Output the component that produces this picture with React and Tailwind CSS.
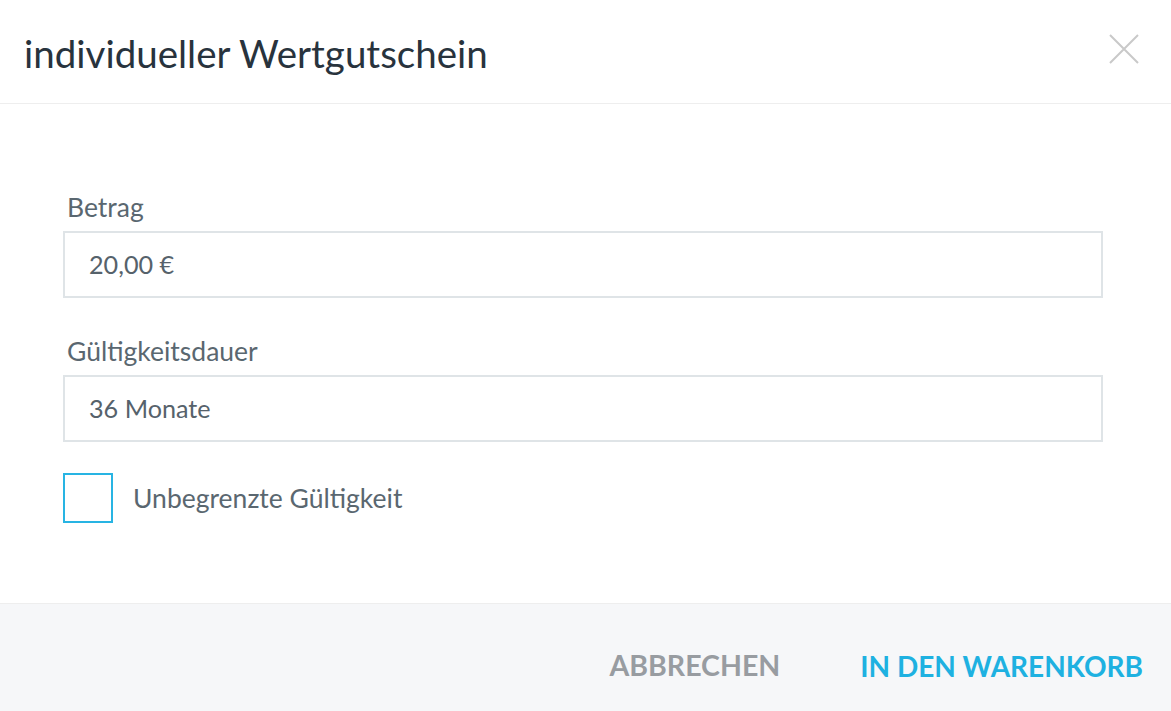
import React, { useState } from 'react';

function CloseIcon() {
  return (
    <svg width="32" height="32" viewBox="0 0 32 32" className="text-[#c9c9c9]">
      <path d="M2 2 L30 30 M30 2 L2 30" stroke="currentColor" strokeWidth="2" fill="none" />
    </svg>
  );
}

export default function App() {
  const [unlimited, setUnlimited] = useState(false);

  return (
    <div className="w-[1171px] h-[711px] bg-white flex flex-col overflow-hidden font-['Lato','Liberation_Sans',sans-serif]">
      {/* header */}
      <div className="h-[104px] shrink-0 flex items-center justify-between pl-[24px] pr-[31px] border-b border-[#eeeeee]">
        <h1 className="text-[38.5px] leading-[46px] text-[#28333d] tracking-[0px] pt-[2px]">individueller Wertgutschein</h1>
        <button className="pb-[6px]">
          <CloseIcon />
        </button>
      </div>

      {/* body */}
      <div className="flex-1 pt-[87px] pl-[63px] pr-[68px]">
        <label className="block pl-[4px] text-[26.5px] leading-[32px] text-[#5a6770] mb-[8px]">Betrag</label>
        <div className="h-[67px] border-2 border-[#dfe4e7] flex items-center pl-[24px] text-[25.2px] text-[#56626b]">
          20,00 €
        </div>

        <label className="block pl-[4px] text-[26.5px] leading-[32px] text-[#5a6770] mt-[37px] mb-[8px]">Gültigkeitsdauer</label>
        <div className="h-[67px] border-2 border-[#dfe4e7] flex items-center pl-[24px] text-[25.2px] text-[#56626b]">
          36 Monate
        </div>

        <div className="mt-[31px] flex items-center gap-[20px]">
          <button
            onClick={() => setUnlimited(!unlimited)}
            className="w-[50px] h-[50px] border-2 border-[#28b4e3] bg-white shrink-0"
          />
          <span className="text-[26.5px] leading-[32px] text-[#5a6770]">Unbegrenzte Gültigkeit</span>
        </div>
      </div>

      {/* footer */}
      <div className="h-[108px] shrink-0 bg-[#f6f7f9] border-t border-[#eeeeee] flex items-center justify-end gap-[80px] pr-[28px] pt-[16px]">
        <button className="text-[28.5px] font-bold text-[#989ca1]">ABBRECHEN</button>
        <button className="text-[28px] font-bold text-[#1eb1e1]">IN DEN WARENKORB</button>
      </div>
    </div>
  );
}
